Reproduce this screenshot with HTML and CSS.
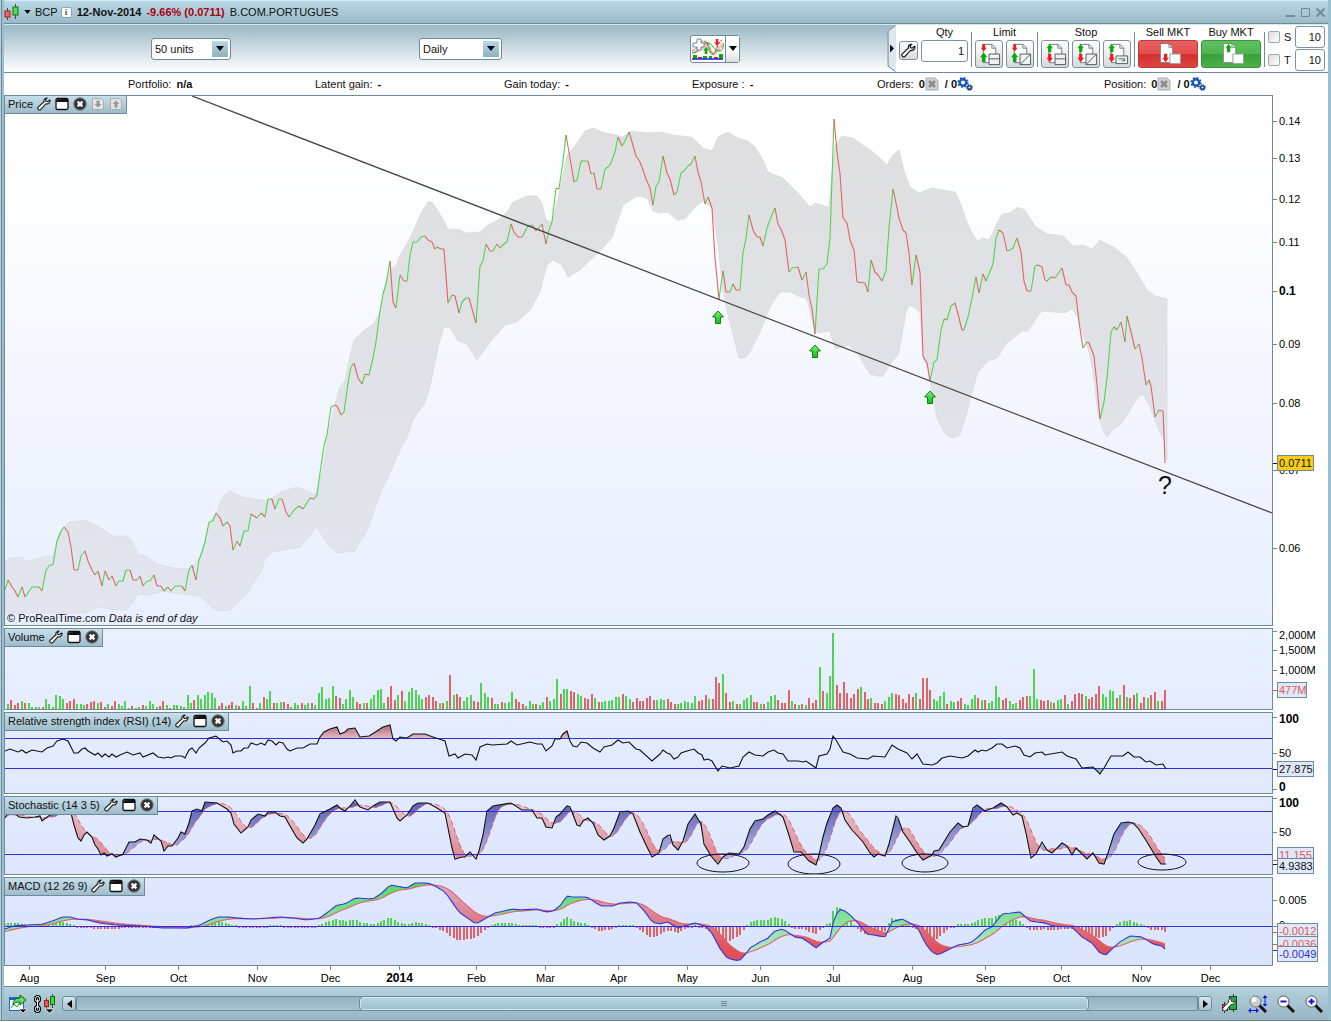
FILE: index.html
```html
<!DOCTYPE html>
<html lang="en">
<head>
    <meta charset="UTF-8">
    <meta name="viewport" content="width=device-width, initial-scale=1.0">
    <title>BCP - B.COM.PORTUGUES</title>
    <link rel="stylesheet" href="styles.css">
</head>
<body>
    <!-- shared icons -->
    <svg class="sprite" aria-hidden="true">
        <linearGradient id="gArrow" x1="0" y1="0" x2="0" y2="1"><stop offset="0" stop-color="#7cf07c"/><stop offset="1" stop-color="#18b418"/></linearGradient>
        <symbol id="i-wrench" viewBox="0 0 14 14"><path d="M8.8 1.2c-1.600.6-2.200 2-1.800 3.500L1 10.300c-.9 1.500.9 3.400 2.500 2.500l5.300-5.900c2 .5 3.900-.7 4.400-3.200l-.7-.6-1.800 1.600-1.800-.4-.3-1.600 1.200-1.400z" fill="#fff" stroke="#222" stroke-width="1.200"/></symbol>
        <symbol id="i-window" viewBox="0 0 14 14"><rect x="1" y="1.5" width="12" height="11" rx="1.5" fill="#fff" stroke="#111" stroke-width="1.3"/><path d="M1 2h7v2.5H1z" fill="#333"/><path d="M7 2h6v3H1V4z" fill="#111"/></symbol>
        <symbol id="i-close" viewBox="0 0 14 14"><circle cx="7" cy="7" r="6.2" fill="#333" stroke="#777"/><path d="M4.6 4.6l4.8 4.8M9.4 4.6L4.6 9.4" stroke="#fff" stroke-width="2.2"/></symbol>
        <symbol id="i-pagedown" viewBox="0 0 14 14"><path d="M1.5 1.5h8.5l2.5 2.5v8.500h-11z" fill="#e4e4e0" stroke="#a9acac"/><path d="M5.500 3.500h3v3.500h2L7 10.500 3.500 7h2z" fill="#999"/></symbol>
        <symbol id="i-pageup" viewBox="0 0 14 14"><path d="M1.5 1.5h8.5l2.5 2.5v8.500h-11z" fill="#e4e4e0" stroke="#a9acac"/><path d="M5.500 10.500h3V7h2L7 3.500 3.500 7h2z" fill="#999"/></symbol>
        <symbol id="i-down" viewBox="0 0 8 5"><path d="M0 0h8L4 5z" fill="#000"/></symbol>
        <symbol id="i-candles" viewBox="0 0 16 16"><path d="M3.500 4v12M11.500 0v15" stroke="#444"/><rect x="1" y="7" width="5" height="6" fill="#e66" stroke="#922"/><rect x="9" y="3" width="5" height="8" fill="#4fe04f" stroke="#186a18"/></symbol>
        <symbol id="i-red" viewBox="0 0 6 8"><path d="M1.500 0h3v4H6L3 8 0 4h1.500z" fill="#e82020"/></symbol>
        <symbol id="i-green" viewBox="0 0 6 8"><path d="M1.500 8h3V4H6L3 0 0 4h1.500z" fill="#0ca80c"/></symbol>
        <symbol id="i-page" viewBox="0 0 27 27"><path d="M7.500 3.500h9l4 4v15h-13z" fill="#fff" stroke="#6c7f88"/><path d="M16.500 3.500v4h4" fill="none" stroke="#6c7f88"/></symbol>
        <symbol id="i-limit" viewBox="0 0 27 27"><use href="#i-page" width="27" height="27"/><use href="#i-red" x="4" y="3" width="8" height="8"/><use href="#i-green" x="4" y="12" width="8" height="10"/><path d="M13.500 13.500h11v11h-11zM13.500 18.500h11" fill="#eef1f2" stroke="#4c5c64"/></symbol>
        <symbol id="i-limit2" viewBox="0 0 27 27"><use href="#i-page" width="27" height="27"/><use href="#i-red" x="4" y="3" width="8" height="8"/><use href="#i-green" x="4" y="12" width="8" height="10"/><path d="M13.500 13.500h11v11h-11zM13.500 24.500l11-11" fill="#eef1f2" stroke="#4c5c64"/></symbol>
        <symbol id="i-stop" viewBox="0 0 27 27"><use href="#i-page" width="27" height="27"/><use href="#i-green" x="4" y="3" width="8" height="9"/><use href="#i-red" x="4" y="13" width="8" height="9"/><path d="M13.500 13.500h11v11h-11zM13.500 18.500h11" fill="#eef1f2" stroke="#4c5c64"/></symbol>
        <symbol id="i-stop2" viewBox="0 0 27 27"><use href="#i-page" width="27" height="27"/><use href="#i-green" x="4" y="3" width="8" height="9"/><use href="#i-red" x="4" y="13" width="8" height="9"/><path d="M13.500 13.500h11v11h-11zM13.500 24.500l11-11" fill="#eef1f2" stroke="#4c5c64"/></symbol>
        <symbol id="i-stop3" viewBox="0 0 27 27"><use href="#i-page" width="27" height="27"/><use href="#i-green" x="4" y="3" width="8" height="9"/><use href="#i-red" x="4" y="13" width="8" height="9"/><path d="M12.500 15.500h12v8h-12z" fill="#eef1f2" stroke="#4c5c64"/><path d="M15 18.500h6.500v2h-3" fill="none" stroke="#4c5c64"/></symbol>
        <symbol id="i-sell" viewBox="0 0 27 27"><path d="M5.500 2.500h9l4 4v16h-13z" fill="#fff" stroke="#8b6b6b"/><path d="M14.500 2.500v4h4" fill="none" stroke="#8b6b6b"/><use href="#i-red" x="7" y="13" width="8" height="9"/><path d="M15.500 13.500h11v10h-11z" fill="#fff" stroke="#999"/></symbol>
        <symbol id="i-buy" viewBox="0 0 27 27"><path d="M5.500 2.500h9l4 4v16h-13z" fill="#fff" stroke="#6b8b6b"/><path d="M14.500 2.500v4h4" fill="none" stroke="#6b8b6b"/><use href="#i-green" x="7" y="3" width="8" height="9"/><path d="M15.500 13.500h11v10h-11z" fill="#fff" stroke="#999"/></symbol>
        <symbol id="i-cancel" viewBox="0 0 14 14"><path d="M1 1h9l3 3v9H1z" fill="#d2d2d2" stroke="#aaa"/><path d="M4 4l6 6M10 4l-6 6" stroke="#8a8a8a" stroke-width="2.500"/></symbol>
        <symbol id="i-gears" viewBox="0 0 16 14"><circle cx="6" cy="5.500" r="3.200" fill="none" stroke="#1658b8" stroke-width="2.400"/><circle cx="6" cy="5.500" r="4.800" fill="none" stroke="#1658b8" stroke-width="1.600" stroke-dasharray="1.900 1.870"/><circle cx="12.500" cy="10.500" r="1.800" fill="none" stroke="#0c3c90" stroke-width="1.500"/><circle cx="12.500" cy="10.500" r="2.900" fill="none" stroke="#0c3c90" stroke-width="1" stroke-dasharray="1.200 1.070"/></symbol>
    </svg>

    <div class="window">
        <header class="titlebar">
            <svg class="icon16"><use href="#i-candles"/></svg>
            <svg class="caret"><use href="#i-down"/></svg>
            <span>BCP</span>
            <button class="info-btn" aria-label="Information">i</button>
            <b>12-Nov-2014</b>
            <b class="loss">-9.66% (0.0711)</b>
            <span>B.COM.PORTUGUES</span>
            <div class="window-controls">
                <button aria-label="Minimize"><svg viewBox="0 0 11 11"><path d="M1 9h9" stroke="#6f8a99" stroke-width="2"/></svg></button>
                <button aria-label="Maximize"><svg viewBox="0 0 11 11"><path d="M1.500 1.500h8v8h-8z" fill="none" stroke="#6f8a99"/></svg></button>
                <button aria-label="Close"><svg viewBox="0 0 11 11"><path d="M1.500 1.500l8 8M9.500 1.500l-8 8" stroke="#6f8a99" stroke-width="1.800"/></svg></button>
            </div>
        </header>

        <div class="toolbar">
            <div class="tools">
                <div class="combo">
                    <select aria-label="Number of units"><option>50 units</option></select>
                    <span class="combo-arrow"><svg><use href="#i-down"/></svg></span>
                </div>
                <div class="combo combo-wide">
                    <select aria-label="Timeframe"><option>Daily</option></select>
                    <span class="combo-arrow"><svg><use href="#i-down"/></svg></span>
                </div>
                <div class="indicator">
                    <button aria-label="Add indicator">
                        <svg viewBox="0 0 32 22">
                            <path d="M0 14c5 0 5-6 8-7s5-4 7-3 4 9 6 10 5-7 10-10v5c-4 2-6 10-10 8s-6-6-8-6-8 7-13 3z" fill="#f3c3c3"/>
                            <path d="M14 6l3-1 4 11 6-5-4 6h-4z" fill="#9fe29f"/>
                            <path d="M0 15c5 0 6-3 8-6s6-5 9-4 6 8 10 8 4-4 5-8" fill="none" stroke="#1a9c1a"/>
                            <path d="M0 13c7-2 5-9 11-10s6 14 10 13 4-12 9-14" fill="none" stroke="#b33" stroke-dasharray="3 1"/>
                            <use href="#i-red" x="22" y="1" width="6" height="7"/>
                            <use href="#i-green" x="11" y="9" width="6" height="7"/>
                            <path d="M5 1h4v4h3v4H9v3H5V9H1V5h4z" fill="#fff" stroke="#6f8a99"/>
                            <path d="M1 17h4v4H1zM11 18h4v3h-4zM17 18h3v3h-3zM27 16h4v5h-4z" fill="#0ca80c"/>
                            <path d="M6 19h4v2H6zM22 19h4v2h-4z" fill="#e02020"/>
                            <path d="M0 21h31" stroke="#22d" stroke-width="1.500"/>
                        </svg>
                    </button>
                    <button class="indicator-more" aria-label="More indicators"><svg><use href="#i-down"/></svg></button>
                </div>
            </div>

            <svg class="trade-edge" viewBox="0 0 9 48"><path d="M9 0L1 5v38l8 5z" fill="#dde8ee"/><path d="M8.500 .500L1 6v36l7.500 5.500" fill="none" stroke="#6f8a99"/><path d="M3 20v8l4-4z"/></svg>
            <div class="trade">
                <button class="tool-btn small" aria-label="Settings"><svg><use href="#i-wrench"/></svg></button>
                <div class="group qty">
                    <label for="qty">Qty</label>
                    <input id="qty" type="text" value="1">
                </div>
                <div class="group sep">
                    <span>Limit</span>
                    <div class="row">
                        <button class="tool-btn" aria-label="Limit order"><svg><use href="#i-limit"/></svg></button>
                        <button class="tool-btn" aria-label="Limit on line"><svg><use href="#i-limit2"/></svg></button>
                    </div>
                </div>
                <div class="group sep">
                    <span>Stop</span>
                    <div class="row">
                        <button class="tool-btn" aria-label="Stop order"><svg><use href="#i-stop"/></svg></button>
                        <button class="tool-btn" aria-label="Stop on line"><svg><use href="#i-stop2"/></svg></button>
                        <button class="tool-btn" aria-label="Trailing stop"><svg><use href="#i-stop3"/></svg></button>
                    </div>
                </div>
                <div class="group sep">
                    <span>Sell MKT</span>
                    <button class="market sell" aria-label="Sell at market"><svg><use href="#i-sell"/></svg></button>
                </div>
                <div class="group">
                    <span>Buy MKT</span>
                    <button class="market buy" aria-label="Buy at market"><svg><use href="#i-buy"/></svg></button>
                </div>
                <div class="limits sep">
                    <div><input type="checkbox" id="s"><label for="s">S</label><input type="text" aria-label="Stop distance" value="10"></div>
                    <div><input type="checkbox" id="t"><label for="t">T</label><input type="text" aria-label="Target distance" value="10"></div>
                </div>
            </div>
        </div>

        <div class="status">
            <div>Portfolio: <b>n/a</b></div>
            <div>Latent gain: <b>-</b></div>
            <div>Gain today: <b>-</b></div>
            <div>Exposure : <b>-</b></div>
            <div>Orders: <b>0</b><svg class="icon14"><use href="#i-cancel"/></svg><b>/ 0</b><svg class="gears"><use href="#i-gears"/></svg></div>
            <div>Position: <b>0</b><svg class="icon14"><use href="#i-cancel"/></svg><b>/ 0</b><svg class="gears"><use href="#i-gears"/></svg></div>
        </div>

        <main class="panels">
            <section class="panel price">
                <div class="plot">
                    <div class="tab">Price <svg><use href="#i-wrench"/></svg><svg><use href="#i-window"/></svg><svg><use href="#i-close"/></svg><svg><use href="#i-pagedown"/></svg><svg><use href="#i-pageup"/></svg></div>
                    <svg id="price" class="chart"></svg>
                    <div class="question">?</div>
                    <div class="credit">© ProRealTime.com <i>Data is end of day</i></div>
                </div>
                <svg id="price-axis" class="axis"></svg>
            </section>
            <section class="panel volume">
                <div class="plot">
                    <div class="tab">Volume <svg><use href="#i-wrench"/></svg><svg><use href="#i-window"/></svg><svg><use href="#i-close"/></svg></div>
                    <svg id="volume" class="chart"></svg>
                </div>
                <svg id="volume-axis" class="axis"></svg>
            </section>
            <section class="panel rsi">
                <div class="plot">
                    <div class="tab">Relative strength index (RSI) (14) <svg><use href="#i-wrench"/></svg><svg><use href="#i-window"/></svg><svg><use href="#i-close"/></svg></div>
                    <svg id="rsi" class="chart"></svg>
                </div>
                <svg id="rsi-axis" class="axis"></svg>
            </section>
            <section class="panel stochastic">
                <div class="plot">
                    <div class="tab">Stochastic (14 3 5) <svg><use href="#i-wrench"/></svg><svg><use href="#i-window"/></svg><svg><use href="#i-close"/></svg></div>
                    <svg id="stochastic" class="chart"></svg>
                </div>
                <svg id="stochastic-axis" class="axis"></svg>
            </section>
            <section class="panel macd">
                <div class="plot">
                    <div class="tab">MACD (12 26 9) <svg><use href="#i-wrench"/></svg><svg><use href="#i-window"/></svg><svg><use href="#i-close"/></svg></div>
                    <svg id="macd" class="chart"></svg>
                </div>
                <svg id="macd-axis" class="axis"></svg>
            </section>
            <div class="time"><svg id="time"></svg></div>
        </main>

        <footer class="bottombar">
            <button class="plain" aria-label="Share chart">
                <svg width="20" height="20" viewBox="0 0 20 20"><rect x="1.500" y="3.500" width="14" height="13" fill="#fff" stroke="#2460c8"/><path d="M1 3h15v3H1z" fill="#2460c8"/><path d="M3 14l3-4 3 3 3-5" fill="none" stroke="#1a1"/><path d="M5 11c0-6 4-7 7-7V1l6 5-6 5V8c-3 0-5 0-7 3z" fill="#62dc62" stroke="#0b650b"/><path d="M11 15h8l-4 4z" stroke="#fff" stroke-width=".700"/></svg>
            </button>
            <button class="plain" aria-label="Link charts">
                <svg width="26" height="20" viewBox="0 0 26 20"><g fill="none" stroke="#000" stroke-width="3"><rect x="3.500" y="2.500" width="4" height="5" rx="2"/><rect x="3.500" y="12.500" width="4" height="5" rx="2"/><path d="M5.500 6v8"/></g><g fill="none" stroke="#fff"><rect x="3.500" y="2.500" width="4" height="5" rx="2"/><rect x="3.500" y="12.500" width="4" height="5" rx="2"/><path d="M5.500 6v8"/></g><path d="M14.500 4v11" stroke="#922"/><path d="M20.500 0v14" stroke="#186a18"/><rect x="12.500" y="6.500" width="4" height="6" fill="#e55" stroke="#922"/><rect x="18.500" y="2.500" width="4" height="8" fill="#3d3" stroke="#186a18"/><path d="M13 15h9l-4.500 4z" stroke="#fff" stroke-width=".700"/></svg>
            </button>
            <button class="scroll-btn" aria-label="Scroll left"><svg width="5" height="8" viewBox="0 0 5 8"><path d="M5 0v8L0 4z"/></svg></button>
            <div class="scroll-track"><div class="scroll-thumb"><svg width="6" height="6" viewBox="0 0 6 6"><path d="M0 .500h6M0 2.500h6M0 4.500h6" stroke="#6f8a99"/></svg></div></div>
            <button class="scroll-btn" aria-label="Scroll right"><svg width="5" height="8" viewBox="0 0 5 8"><path d="M0 0v8l5-4z"/></svg></button>
            <button class="plain zoomer" aria-label="Chart settings">
                <svg width="20" height="20" viewBox="0 0 20 20"><path d="M4.500 8v11M13.500 0v18" stroke="#333"/><rect x="2.500" y="10.500" width="5" height="6" fill="#d44" stroke="#622"/><rect x="9.500" y="2.500" width="7" height="13" fill="#28a745" stroke="#0b4c0b"/><path d="M11 4c-2 1-3 2-2.500 4L3 14c-1 2 1 4 3 2.500l5-6c3 0 4-1 4.500-3.500l-2 1-2-.500-.500-2z" fill="#fff" stroke="#333"/></svg>
            </button>
            <button class="plain zoomer" aria-label="Fit zoom">
                <svg width="20" height="20" viewBox="0 0 20 20"><path d="M11 11l7 7" stroke="#111" stroke-width="3"/><circle cx="7.500" cy="7.500" r="5.500" fill="#ccc" stroke="#777"/><circle cx="6" cy="5.500" r="2.500" fill="#fff"/><path d="M1 16.500h9M17 3v8" stroke="#11e"/><path d="M0 16.500l3-2.500v5zM11 16.500L8 14v5zM17 1l2.500 3h-5zM17 12.500L14.500 10h5z" fill="#11e"/></svg>
            </button>
            <button class="plain zoomer" aria-label="Zoom out">
                <svg width="20" height="20" viewBox="0 0 20 20"><path d="M11 11l7 7" stroke="#111" stroke-width="3"/><circle cx="7.500" cy="7.500" r="5.500" fill="#fff" stroke="#555"/><path d="M4.500 7.500h6" stroke="#11e" stroke-width="2"/></svg>
            </button>
            <button class="plain zoomer" aria-label="Zoom in">
                <svg width="20" height="20" viewBox="0 0 20 20"><path d="M11 11l7 7" stroke="#111" stroke-width="3"/><circle cx="7.500" cy="7.500" r="5.500" fill="#fff" stroke="#555"/><path d="M4.500 7.500h6M7.500 4.500v6" stroke="#11e" stroke-width="2"/></svg>
            </button>
        </footer>
    </div>

    <script src="chart.js"></script>
</body>
</html>
```
FILE: styles.css
```css
* {
    box-sizing: border-box;
}
body {
    margin: 0;
    font-family: "Liberation Sans", Arial, sans-serif;
    font-size: 11px;
    line-height: 14px;
    color: #111;
    background: #fff;
}
button, select, input {
    font: inherit;
    color: inherit;
    padding: 0;
    margin: 0;
}
button {
    cursor: pointer;
}
svg {
    display: block;
}
.sprite {
    position: absolute;
    width: 0;
    height: 0;
}
.window {
    padding: 0 3px 0 4px;
    background: linear-gradient(90deg, #b4d0de 1px, #6f8a99 1px, #6f8a99 2px, #9cbfd0 2px);
    border-bottom: 1px solid #6f8a99;
}

/* title bar */
.titlebar {
    display: flex;
    align-items: center;
    height: 24px;
    background: linear-gradient(#b9d8e8, #9cbac7);
    border-top: 1px solid #d4ecf7;
    border-bottom: 1px solid #6f8a99;
}
.titlebar b {
    margin-right: 5px;
}
.titlebar .loss {
    color: #a80010;
}
.icon16 {
    width: 16px;
    height: 16px;
}
.caret {
    width: 7px;
    height: 4px;
    margin: 0 4px;
}
.info-btn {
    width: 11px;
    height: 11px;
    margin: 0 5px 0 3px;
    border: 1px solid #8aa;
    border-radius: 2px;
    background: #fff;
    font: bold 9px/9px "Liberation Serif", serif;
    color: #556;
}
.window-controls {
    display: flex;
    gap: 4px;
    margin-left: auto;
    margin-right: 2px;
}
.window-controls button {
    width: 11px;
    height: 11px;
    border: 0;
    background: none;
}

/* toolbar */
.toolbar {
    display: flex;
    height: 49px;
    background: linear-gradient(#9ab8c5, #fff);
    border-top: 1px solid #d4e8f0;
    border-bottom: 1px solid #6f8a99;
}
.tools {
    flex: 1;
    display: flex;
    justify-content: space-between;
    align-items: center;
    padding: 0 147px;
}
.combo {
    position: relative;
    width: 80px;
}
.combo-wide {
    width: 83px;
}
.combo select {
    display: block;
    appearance: none;
    width: 100%;
    height: 22px;
    padding-left: 3px;
    border: 1px solid #6f8a99;
    border-radius: 3px;
    background: #fff;
}
.combo-arrow {
    position: absolute;
    top: 3px;
    right: 3px;
    width: 16px;
    height: 16px;
    display: grid;
    place-items: center;
    background: linear-gradient(#b9d8e8, #8fb0bf);
    pointer-events: none;
}
.combo-arrow svg, .indicator-more svg {
    width: 8px;
    height: 5px;
}
.indicator {
    display: flex;
    border: 1px solid #6f8a99;
    border-radius: 3px;
    background: #fff;
}
.indicator button {
    width: 34px;
    height: 26px;
    padding: 1px;
    border: 0;
    background: none;
}
.indicator .indicator-more {
    display: grid;
    place-items: center;
    width: 14px;
    border-left: 1px solid #6f8a99;
    background: linear-gradient(#fff 50%, #ddd);
}
.trade-edge {
    width: 9px;
    height: 47px;
}
.trade {
    display: flex;
    gap: 3px;
    padding: 0 3px;
    background: #fff;
}
.tool-btn {
    width: 28px;
    height: 28px;
    border: 1px solid #7d929d;
    border-radius: 3px;
    background: linear-gradient(#fff, #d6dadc);
}
.tool-btn svg {
    width: 26px;
    height: 26px;
}
.tool-btn.small {
    width: 19px;
    height: 19px;
    margin-top: 16px;
    padding: 1px;
}
.tool-btn.small svg {
    width: 15px;
    height: 15px;
}
.group {
    display: flex;
    flex-direction: column;
    align-items: center;
    line-height: 15px;
}
.row {
    display: flex;
    gap: 3px;
}
.sep {
    position: relative;
    margin-left: 4px;
}
.sep::before {
    content: "";
    position: absolute;
    left: -4px;
    top: 7px;
    bottom: 5px;
    border-left: 1px solid #6f8a99;
}
.trade input[type="text"] {
    width: 47px;
    height: 22px;
    padding-right: 3px;
    text-align: right;
    border: 1px solid #7d929d;
    border-radius: 3px;
    background: #fff;
}
.market {
    display: grid;
    place-items: center;
    width: 60px;
    height: 28px;
    border-radius: 3px;
}
.market svg {
    width: 26px;
    height: 26px;
}
.sell {
    border: 1px solid #b83a3a;
    background: linear-gradient(#e86060, #e24e4e 50%, #d42f2f 50%, #dd4444);
}
.buy {
    border: 1px solid #3a943a;
    background: linear-gradient(#60c060, #4fb64f 50%, #36a036 50%, #4cb04c);
}
.limits {
    display: flex;
    flex-direction: column;
    gap: 1px;
    padding-top: 1px;
}
.limits div {
    display: flex;
    align-items: center;
    gap: 4px;
}
.limits label {
    width: 7px;
}
.limits input[type="checkbox"] {
    appearance: none;
    width: 12px;
    height: 12px;
    border: 1px solid #9aa8af;
    border-radius: 2px;
    background: linear-gradient(135deg, #ddd, #fff);
}
.trade .limits input[type="text"] {
    width: 30px;
}

/* account row */
.status {
    display: grid;
    grid-template-columns: 187fr 189fr 188fr 185fr 227fr 224fr;
    align-items: center;
    height: 22px;
    padding-left: 124px;
    background: #fff;
}
.status div {
    display: flex;
    align-items: center;
    white-space: pre;
}
.status b {
    margin-left: 2px;
}
.icon14 {
    width: 14px;
    height: 14px;
    margin-right: 4px;
}
.gears {
    width: 16px;
    height: 14px;
}

/* chart panels */
.panels {
    display: flex;
    flex-direction: column;
    gap: 2px;
    background: #fff;
}
.panel {
    display: flex;
}
.plot {
    position: relative;
    flex: 1;
    min-width: 0;
    border: 1px solid #6f8a99;
}
.chart {
    width: 100%;
}
.price .plot {
    background: linear-gradient(#fff 8%, #f2f5ff 62%, #e8effe);
}
.volume .plot {
    background: linear-gradient(#e9f0ff, #e5ecfe);
}
.rsi .plot {
    background: linear-gradient(#e4ecfe, #e1e9fe);
}
.stochastic .plot {
    background: linear-gradient(#e1eafe, #dee7fe);
}
.macd .plot {
    background: linear-gradient(#dfe8fe, #dae4fd);
}
.tab {
    position: absolute;
    top: 0;
    left: 0;
    display: flex;
    align-items: center;
    gap: 4px;
    height: 18px;
    padding: 0 3px 1px;
    background: linear-gradient(#c8dfec, #9dbccb);
    border-right: 1px solid #6f8a99;
    border-bottom: 1px solid #6f8a99;
}
.tab svg {
    width: 14px;
    height: 14px;
}
.question {
    position: absolute;
    left: 91%;
    top: 376px;
    font-size: 25px;
    line-height: 26px;
}
.credit {
    position: absolute;
    left: 2px;
    bottom: 0;
}
.axis {
    width: 55px;
    margin: 1px 0;
    overflow: visible;
}
.axis text, .time text {
    font-size: 11px;
}
.axis .major, .time .major {
    font-size: 12px;
    font-weight: bold;
}
.time {
    height: 21px;
    margin-top: -2px;
    border-bottom: 1px solid #6f8a99;
    padding: 0 56px 0 1px;
}
.time svg {
    width: 100%;
    height: 20px;
    overflow: visible;
}

/* scroll bar and zoom buttons */
.bottombar {
    display: flex;
    align-items: center;
    height: 33px;
    padding: 0 4px;
    background: linear-gradient(#b3d0dc, #98b6c4);
}
.plain {
    border: 0;
    background: none;
    margin-right: 4px;
}
.zoomer {
    margin: 0 0 0 8px;
}
.scroll-btn {
    display: grid;
    place-items: center;
    width: 14px;
    height: 15px;
    border: 1px solid #6f8a99;
    border-radius: 3px;
    background: linear-gradient(#d6e6ee, #a4c2cf);
}
.scroll-track {
    flex: 1;
    height: 15px;
    border: 1px solid #6f8a99;
    background: linear-gradient(#93b2c0, #a6c4d1);
}
.scroll-thumb {
    display: grid;
    place-items: center;
    width: 65%;
    height: 13px;
    margin-left: 25.3%;
    border: 1px solid #d4e8f0;
    border-radius: 3px;
    outline: 1px solid #6f8a99;
    background: linear-gradient(#b7d4e1, #9fc0cf);
}
```
FILE: chart.js
```js
// all panels share one x scale, 5..1272; every panel has its own y range
const LEFT = 5, WIDTH = 1267;
const FIRST = 8, STEP = 3.4537, DAYS = 336;

const GREEN = "#4fd44f", RED = "#e06464", FRAME = "#6f8a99";

const price = "5,590 8,580 12,587 15,591 18,597 22,587 25,597 32,587 39,587 42,591 46,570 50,565 53,565 57,541 61,531 64,527 68,532 71,547 74,570 78,570 81,556 85,551 88,561 92,570 95,575 98,571 102,586 105,571 109,580 112,576 116,586 119,581 123,581 126,570 130,570 133,580 137,580 140,576 143,586 147,581 150,581 154,575 157,586 161,586 164,591 168,587 171,591 175,586 182,586 185,591 189,570 192,565 196,580 199,560 202,552 205,542 209,522 213,521 216,513 220,518 223,526 227,522 230,526 233,550 237,541 240,546 244,531 248,531 251,514 257,518 261,513 265,517 268,499 272,499 275,509 279,499 282,499 286,512 289,517 295,509 299,506 303,509 310,498 314,499 317,495 320,473 324,446 327,435 331,407 335,405 337,406 341,415 344,412 348,383 351,367 354,363 358,378 362,384 365,374 369,375 373,358 376,342 379,318 383,294 386,284 390,261 393,302 396,308 400,275 404,281 407,281 410,255 413,242 417,242 421,237 425,236 428,240 432,242 435,249 437,247 441,249 444,249 448,303 452,295 455,296 459,313 462,302 466,298 469,298 476,323 480,266 483,261 486,244 490,251 493,251 497,244 500,248 504,244 507,242 511,224 514,232 518,237 522,237 528,226 532,225 536,231 542,224 546,244 549,230 552,222 556,188 559,189 563,161 566,135 570,158 574,182 577,180 581,161 584,161 588,161 591,174 594,173 597,189 601,189 605,169 608,167 611,163 615,152 618,137 622,146 625,141 629,132 632,142 636,156 639,160 642,167 646,179 650,188 653,205 656,186 659,182 663,156 667,173 670,179 674,195 677,192 681,173 684,171 688,166 691,164 695,156 698,172 701,182 705,204 708,197 712,208 715,258 719,299 723,271 726,292 730,292 733,284 736,290 740,290 743,253 746,238 749,215 753,230 757,237 760,237 763,246 767,228 771,217 775,208 778,224 781,229 785,240 789,272 792,268 798,267 802,280 806,272 809,295 812,309 815,334 819,269 823,269 827,264 830,238 834,119 837,152 840,174 843,218 847,223 850,240 854,250 857,282 865,283 868,292 871,260 875,272 878,275 882,281 886,271 889,228 893,189 896,203 899,218 903,230 906,233 909,253 912,285 916,255 920,272 923,356 927,363 930,381 934,362 937,360 941,330 944,319 947,320 951,306 955,303 958,314 962,330 964,330 968,317 972,298 976,277 979,293 983,274 986,281 989,274 993,264 996,238 999,230 1003,233 1007,251 1010,250 1013,248 1017,238 1021,252 1024,281 1027,291 1031,291 1035,266 1038,265 1042,267 1045,280 1047,281 1051,277 1055,278 1062,268 1066,285 1069,285 1072,292 1076,296 1079,322 1083,348 1087,342 1089,343 1094,356 1097,385 1100,419 1104,402 1107,378 1111,332 1114,327 1117,330 1121,322 1125,342 1127,316 1131,332 1135,349 1139,344 1142,358 1146,385 1149,380 1151,386 1155,417 1159,410 1163,411 1164,435 1165,463";

const bandTop = "5,562 10,558 22,557 25,562 33,560 43,557 53,556 57,541 64,527 70,522 85,520 97,526 113,536 127,536 132,541 138,554 148,557 157,564 173,568 187,569 193,567 200,557 210,522 217,512 222,498 229,491 243,497 267,501 272,498 283,491 298,487 315,495 322,473 328,437 334,407 340,387 345,380 350,355 354,340 362,332 373,324 380,312 384,290 390,269 396,266 400,255 408,242 415,227 422,211 428,202 432,202 440,214 448,229 460,230 466,233 480,232 488,225 498,220 507,212 513,202 527,196 537,196 542,203 546,220 552,222 558,198 567,155 577,143 585,131 593,128 605,133 613,134 622,137 632,131 647,133 663,132 672,135 692,137 703,148 712,151 718,137 728,132 738,138 748,141 755,147 762,158 768,172 783,178 797,192 810,207 815,203 829,207 832,172 835,145 842,136 853,138 867,148 873,152 880,158 887,165 893,155 899,150 905,174 910,187 919,193 932,188 955,192 960,202 967,222 973,235 978,241 983,238 988,240 993,233 997,223 1002,214 1010,213 1018,207 1025,210 1035,226 1047,234 1063,236 1073,246 1083,245 1092,249 1100,240 1115,248 1127,258 1137,273 1147,290 1155,296 1167,299";
const bandBottom = "1167,460 1164,440 1158,428 1150,407 1143,394 1138,397 1127,415 1122,423 1113,430 1107,437 1103,430 1098,415 1093,372 1088,348 1083,335 1078,317 1072,309 1065,313 1042,311 1037,317 1028,331 1022,331 1007,343 997,358 988,361 978,372 972,392 967,412 960,435 957,436 953,438 947,436 943,430 937,418 932,392 928,368 923,358 920,312 915,308 909,305 906,312 899,353 892,362 882,377 870,374 860,358 857,352 848,345 835,349 830,331 818,333 813,325 807,299 798,296 790,292 780,292 770,307 760,332 750,352 745,358 739,358 733,335 728,315 723,292 717,238 712,208 703,201 695,207 685,219 677,220 668,212 660,213 653,211 647,198 637,196 623,205 612,238 597,254 580,270 568,277 562,265 553,260 547,265 540,292 530,310 517,322 505,325 492,340 477,360 467,344 458,341 450,328 444,327 438,348 430,387 425,402 413,420 410,430 397,457 380,495 367,530 355,551 337,553 328,545 317,527 300,547 273,552 265,558 262,570 247,593 230,610 218,611 212,607 200,596 182,594 163,591 150,595 138,594 127,610 117,610 98,607 85,613 5,613";

// bar heights, negative = down day
const volume = [
    5,-9,-4,-6,8,-6,6,2,2,2, -2,10,5,2,14,13,10,-6,-8,-10, 5,5,4,-5,-7,-8,6,-7,-2,5,
    -3,-8,5,3,8,1,-3,1,2,-4, 3,8,5,2,-3,-8,4,-1,4,4, 3,2,14,6,-9,14,10,14,17,16,
    11,-3,-6,3,-4,-7,4,-3,8,3, 23,-6,-1,6,-12,10,18,-6,6,7, -7,-5,2,6,4,-6,4,6,-6,4,
    16,22,10,11,23,-13,-11,5,10,19, 12,-7,-5,6,-6,10,14,19,20,6, -12,-23,-9,14,-18,8,17,21,19,14,
    10,-12,-14,-12,-8,6,-6,8,-34,14, -15,-12,8,12,14,-8,-7,26,16,12, -11,5,5,-7,6,7,17,-10,-7,-5,
    3,8,5,-5,4,7,-12,8,10,30, -15,20,20,-18,-17,15,13,-11,-10,-15, 11,-7,7,8,8,9,12,12,-15,13,
    10,-7,-11,-8,-8,-11,-13,-9,9,10, 9,-10,-7,-5,5,6,8,7,6,13, -8,-9,-14,10,-10,-32,-26,35,-16,-7,
    8,-5,5,9,11,14,-7,-7,5,-5, 7,13,14,-9,-6,-6,-19,8,-5,4, -5,4,-11,-6,-9,42,-18,16,33,76,
    -24,-16,-27,-16,-11,-15,-20,22,-17,-10, 11,-6,-6,-5,8,12,16,-15,-14,-10, -6,-15,-12,16,-10,-31,-31,-19,10,8,
    13,17,-5,8,7,-8,-11,5,4,10, 14,-11,9,-9,6,8,23,12,-9,-11, 8,5,6,-9,-12,-13,13,40,10,-9,
    -8,-9,7,-6,9,10,-14,5,-8,-15, -16,-15,13,-10,-12,-15,-23,15,12,19, 18,-11,14,-24,12,-11,-14,16,-6,-12,
    11,-14,-17,8,-8,-19
];

const rsi = "5,751 10,749 18,752 22,750 26,753 32,750 42,752 47,748 53,746 57,741 63,739 68,741 74,753 78,753 82,749 85,748 88,751 95,755 98,753 102,757 105,754 109,757 112,754 116,757 120,755 127,752 133,755 140,753 143,757 153,753 158,757 164,758 168,757 171,758 175,756 182,756 185,758 189,750 192,748 196,753 199,748 205,743 209,738 216,736 223,742 227,741 231,745 233,753 237,751 241,751 244,748 248,748 251,743 257,745 261,743 265,745 268,740 272,741 276,745 279,742 283,743 287,749 290,751 297,748 303,748 310,744 317,744 320,737 324,732 330,729 337,727 340,734 345,732 348,729 355,728 360,737 369,736 377,731 383,727 390,725 393,739 396,741 400,737 407,738 413,734 425,734 433,737 445,741 449,756 455,754 458,758 465,754 472,755 476,760 480,747 487,744 492,745 507,744 511,741 517,745 530,742 537,744 542,744 546,751 552,746 555,739 560,739 563,734 567,731 570,741 573,746 577,747 581,742 587,743 593,748 600,752 604,747 612,745 618,740 623,743 629,742 636,749 640,750 652,761 660,754 663,750 667,753 670,754 674,759 678,757 681,753 687,751 694,749 698,753 702,755 704,760 708,759 712,761 718,771 722,766 730,768 739,766 743,757 749,752 755,755 763,756 768,752 774,750 778,753 783,754 788,761 798,761 803,762 806,761 816,768 819,756 827,754 830,749 833,736 836,740 843,752 850,754 857,758 868,759 873,756 885,757 892,745 898,749 907,753 912,759 917,754 923,764 932,765 937,763 942,758 950,756 962,758 968,756 975,750 978,752 982,750 986,751 992,748 997,744 1002,744 1007,748 1015,746 1020,748 1024,755 1030,757 1035,753 1042,752 1045,755 1062,752 1067,756 1076,759 1082,768 1093,767 1100,774 1104,768 1111,756 1123,756 1128,752 1134,757 1140,757 1146,762 1150,761 1156,765 1163,764 1166,769";

const stochastic = "5,818 8,813 17,815 19,817 27,818 35,817 40,816 42,821 50,815 60,811 66,808 71,813 74,825 78,838 81,841 84,835 87,832 92,837 95,845 98,849 101,855 104,853 107,856 112,854 116,857 123,854 129,842 135,842 140,839 147,840 151,843 154,835 161,841 164,851 168,846 172,846 178,838 181,832 185,834 189,823 192,811 197,809 202,811 205,802 217,803 227,809 231,813 234,824 241,833 248,827 251,820 258,814 265,816 268,812 275,812 280,816 285,817 290,826 297,838 303,843 307,839 315,825 320,814 330,809 337,805 341,809 345,811 350,806 355,800 360,807 368,810 373,806 380,802 390,802 393,809 397,818 400,821 407,815 413,806 418,803 428,803 437,808 445,813 448,828 452,848 455,859 462,857 465,857 470,852 476,859 479,851 483,835 487,811 493,806 511,803 522,810 532,810 537,818 542,818 546,827 552,828 556,817 560,814 567,806 570,807 577,825 580,826 583,821 588,818 593,823 598,835 604,840 610,836 614,828 620,812 628,811 633,814 640,832 646,845 652,857 659,853 663,839 667,836 670,835 673,845 678,850 683,841 688,824 695,814 701,824 704,844 711,856 718,864 723,857 729,853 739,854 744,847 750,829 755,821 763,819 768,815 775,811 783,817 788,832 794,852 801,852 809,861 816,865 819,855 823,837 827,823 833,808 837,805 841,808 845,820 852,830 863,842 870,853 874,857 878,854 885,856 889,844 896,816 898,818 903,832 910,842 917,853 923,860 932,855 934,851 939,850 950,832 958,823 963,827 968,826 973,808 977,805 985,811 993,808 1001,803 1007,807 1013,815 1017,813 1022,816 1026,833 1031,858 1036,854 1042,842 1047,850 1052,853 1062,843 1067,846 1072,855 1076,848 1087,859 1093,853 1099,863 1104,864 1108,853 1114,834 1121,823 1128,822 1133,823 1138,828 1147,842 1156,857 1161,864 1166,864";

const macd = "5,929 13,926 28,925 43,924 55,920 62,917 70,917 77,919 88,920 100,923 117,925 140,926 163,928 187,928 200,925 210,920 218,917 228,917 237,918 253,919 280,917 293,918 307,920 320,918 328,912 337,905 345,904 355,898 373,899 382,893 390,885 407,888 415,883 428,883 437,887 445,892 450,899 459,912 476,924 488,917 495,913 513,909 520,910 537,909 546,912 553,911 560,906 567,896 573,897 587,897 593,901 601,906 613,906 620,903 630,902 637,903 646,913 652,922 659,924 668,922 678,928 695,923 707,927 713,935 719,947 727,958 739,961 745,955 750,948 760,942 767,939 775,931 783,929 795,937 802,938 808,942 816,948 822,943 830,938 833,923 837,913 841,909 848,913 857,922 867,934 885,937 892,922 902,919 910,923 918,928 925,943 932,952 938,955 950,949 958,945 970,943 977,938 985,930 992,927 1002,914 1020,912 1030,921 1045,923 1053,926 1072,927 1082,937 1092,943 1100,953 1106,955 1113,948 1120,942 1130,936 1142,937 1153,944 1162,946 1166,950";

const parse = s => s.split(" ").map(p => p.split(",").map(Number));
const join = pts => pts.map(p => p[0].toFixed(1) + "," + p[1].toFixed(1)).join(" ");

// value of the line for every trading day
function daily(points) {
    const out = [];
    let k = 0;
    for (let i = -1; i < DAYS; i++) {
        const x = FIRST + i * STEP;
        while (k < points.length - 2 && points[k + 1][0] < x) k++;
        const [x1, y1] = points[k], [x2, y2] = points[k + 1];
        const t = Math.max(0, Math.min(1, (x - x1) / (x2 - x1)));
        out.push([x, y1 + (y2 - y1) * t]);
    }
    return out;
}

// areas between two lines, one colour where a is above b and one where it is below
function between(a, b, above, below) {
    let html = "", start = 0;
    for (let i = 1; i <= a.length; i++) {
        const up = a[i - 1][1] < b[i - 1][1];
        if (i === a.length || (a[i][1] < b[i][1]) !== up) {
            const end = Math.min(i + 1, a.length);
            const shape = a.slice(start, end).concat(b.slice(start, end).reverse());
            html += `<polygon points="${join(shape)}" fill="${up ? above : below}"/>`;
            start = i;
        }
    }
    return html;
}

const line = (pts, color, extra = "") => `<polyline points="${pts}" fill="none" stroke="${color}" ${extra}/>`;
const level = (y, color = "#3030e0") => `<path d="M5 ${y + .5}H1272" stroke="${color}" shape-rendering="crispEdges"/>`;
const gradient = (id, y1, c1, y2, c2) => `<linearGradient id="${id}" gradientUnits="userSpaceOnUse" x1="0" x2="0" y1="${y1}" y2="${y2}"><stop offset="0" stop-color="${c1}"/><stop offset="1" stop-color="${c2}"/></linearGradient>`;
const bar = (x, y, h, color) => `<rect x="${Math.round(x) - 1}" y="${y}" width="2" height="${h}" fill="${color}" shape-rendering="crispEdges"/>`;

function draw(id, top, height, html) {
    const svg = document.getElementById(id);
    svg.setAttribute("viewBox", `${LEFT} ${top} ${WIDTH} ${height}`);
    svg.setAttribute("preserveAspectRatio", "none");
    svg.style.height = height + "px";
    svg.innerHTML = html;
}

function drawPrice() {
    const pts = parse(price);
    let up = "", down = "", rising = true;
    for (let i = 1; i < pts.length; i++) {
        if (pts[i][1] !== pts[i - 1][1]) rising = pts[i][1] < pts[i - 1][1];
        const seg = `M${pts[i - 1]}L${pts[i]}`;
        if (rising) up += seg; else down += seg;
    }
    const arrows = [[718, 311], [815, 345], [930, 391]].map(([x, y]) =>
        `<path transform="translate(${x} ${y})" d="M0 0L5.500 6H2.500V12.500H-2.500V6H-5.500Z" fill="url(#gArrow)" stroke="#078a07"/>`).join("");
    draw("price", 96, 529,
        gradient("band", 130, "#dfdfe0", 610, "#e2e5ee") +
        `<polygon points="${bandTop} ${bandBottom}" fill="url(#band)" stroke="#d6d7da" stroke-width=".6" stroke-linejoin="round"/>` +
        `<path d="${up}" fill="none" stroke="${GREEN}" stroke-width="1.1"/><path d="${down}" fill="none" stroke="${RED}" stroke-width="1.1"/>` +
        `<path d="M192 96L1272 513" stroke="#444" stroke-width="1.3"/>` + arrows);
}

function drawVolume() {
    draw("volume", 629, 80, volume.map((v, i) =>
        bar(FIRST + i * STEP, 709 - Math.abs(v), Math.abs(v), v > 0 ? GREEN : RED)).join(""));
}

function drawRsi() {
    draw("rsi", 713, 80,
        gradient("over", 724, "#b0606c", 738, "#e0bcc8") +
        `<clipPath id="hi"><path d="M5 713H1272V738H5z"/></clipPath><clipPath id="lo"><path d="M5 769H1272V793H5z"/></clipPath>` +
        `<polygon points="5,738 ${rsi} 1166,738" fill="url(#over)" clip-path="url(#hi)"/>` +
        `<polygon points="5,769 ${rsi} 1166,769" fill="#8fc4a0" clip-path="url(#lo)"/>` +
        level(738) + level(768) + line(rsi, "#111", 'stroke-width="1.1"'));
}

function drawStochastic() {
    const k = daily(parse(stochastic));
    const d = k.map((p, i) => {
        const part = k.slice(Math.max(0, i - 4), i + 1);
        return [p[0], part.reduce((sum, q) => sum + q[1], 0) / part.length];
    });
    const rings = [[723, 863, 26, 9], [814, 864, 26, 10], [925, 863, 23, 9], [1162, 862, 24, 8]].map(e =>
        `<ellipse cx="${e[0]}" cy="${e[1]}" rx="${e[2]}" ry="${e[3]}" fill="none" stroke="#111"/>`).join("");
    draw("stochastic", 797, 77,
        gradient("kUp", 800, "#5c5cb0", 862, "#b4bcec") + gradient("kDown", 800, "#e8ccd8", 865, "#dc8088") +
        between(k, d, "url(#kUp)", "url(#kDown)") +
        level(811) + level(854) +
        line(join(d), "#e06070", 'stroke-dasharray="5 3"') +
        line(stochastic, "#111", 'stroke-width="1.1"') + rings);
}

function drawMacd() {
    const m = daily(parse(macd));
    let ema = 932;
    const signal = m.map(p => [p[0], ema += (p[1] - ema) * .2]);
    const hist = m.map((p, i) => {
        const h = Math.round(signal[i][1] - p[1]);
        return h > 0 ? bar(p[0], 926 - h, h, GREEN) : bar(p[0], 927, Math.max(-h, 1), RED);
    }).join("");
    draw("macd", 878, 87,
        gradient("mUp", 880, "#50dc60", 955, "#b4e8d0") + gradient("mDown", 880, "#dcb4cc", 950, "#e05058") +
        hist + between(m, signal, "url(#mUp)", "url(#mDown)") +
        line(join(signal), "#e06464", 'stroke-width="1.1"') +
        line(join(m), "#3434e4", 'stroke-width="1.1"') + level(926));
}

// labels: [text, text y, tick y, bold]; tags: [text, y, width, tick y, colour, fill]
function axis(id, top, height, labels, tags) {
    const svg = document.getElementById(id);
    svg.setAttribute("viewBox", `0 ${top} 55 ${height}`);
    svg.style.height = height + "px";
    const tick = (y, color) => `<path d="M0 ${y + .5}H4" stroke="${color}"/>`;
    svg.innerHTML =
        labels.map(([t, y, ty, bold]) => tick(ty, FRAME) + `<text x="6" y="${y + 4}" class="${bold ? "major" : ""}">${t}</text>`).join("") +
        tags.map(([t, y, w, ty, color, fill]) => tick(ty, color) +
            `<rect x="4.500" y="${y + .5}" width="${w}" height="15" fill="${fill || "#dfe8f8"}" stroke="${FRAME}"/>` +
            `<text x="6" y="${y + 12}" fill="${color}">${t}</text>`).join("");
}

function drawTime() {
    const months = [["Aug", 29], ["Sep", 105], ["Oct", 178], ["Nov", 257], ["Dec", 330], ["2014", 399, 1], ["Feb", 476], ["Mar", 545], ["Apr", 618], ["May", 687], ["Jun", 760], ["Jul", 833], ["Aug", 912], ["Sep", 985], ["Oct", 1061], ["Nov", 1141], ["Dec", 1210]];
    document.getElementById("time").innerHTML = months.map(([t, x, bold]) => {
        const pos = ((x - LEFT + .5) / WIDTH * 100).toFixed(3) + "%";
        return `<line x1="${pos}" x2="${pos}" y1="0" y2="4" stroke="${FRAME}"/><text x="${pos}" y="16" text-anchor="middle" class="${bold ? "major" : ""}">${t}</text>`;
    }).join("");
}

drawPrice();
drawVolume();
drawRsi();
drawStochastic();
drawMacd();
drawTime();

axis("price-axis", 96, 529,
    [["0.14", 121, 121], ["0.13", 158, 158], ["0.12", 199, 199], ["0.11", 242, 242], ["0.1", 291, 291, 1], ["0.09", 344, 344], ["0.08", 403, 403], ["0.07", 470, 470], ["0.06", 548, 548]],
    [["0.0711", 455, 36, 463, "#111", "#f8cc10"]]);
axis("volume-axis", 629, 80,
    [["2,000M", 635, 631], ["1,500M", 650, 650], ["1,000M", 670, 670]],
    [["477M", 682, 29, 690, "#e05a5a"]]);
axis("rsi-axis", 713, 80,
    [["100", 719, 717, 1], ["50", 753, 753], ["0", 787, 789, 1]],
    [["27.875", 761, 36, 769, "#111"]]);
axis("stochastic-axis", 797, 77,
    [["100", 803, 798, 1], ["50", 832, 832]],
    [["11.155", 847, 36, 860, "#e05a5a"], ["4.9383", 858, 36, 864, "#111"]]);
axis("macd-axis", 878, 87,
    [["0.005", 900, 900], ["0", 925, 926]],
    [["-0.0012", 923, 40, 932, "#e05a5a"], ["-0.0036", 936, 40, 944, "#e05a5a"], ["-0.0049", 946, 40, 950, "#2c2ce0"]]);
```
